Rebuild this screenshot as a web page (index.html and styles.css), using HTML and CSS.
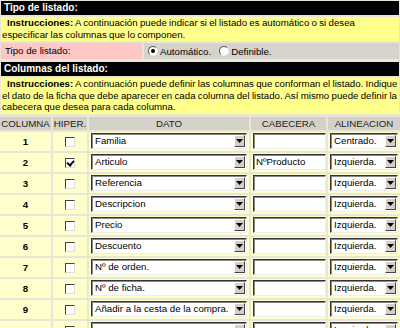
FILE: index.html
```html
<!DOCTYPE html>
<html lang="es">
<head>
    <meta charset="UTF-8">
    <title>Listado</title>
    <link rel="stylesheet" href="styles.css">
</head>
<body>
    <div class="page">
        <div class="bar">Tipo de listado:</div>
        <div class="note"><b>Instrucciones:</b> A continuación puede indicar si el listado es automático o si desea especificar las columnas que lo componen.</div>

        <div class="type-row">
            <div class="type-label">Tipo de listado:</div>
            <div class="type-opts">
                <span class="radio on"></span>Automático.
                <span class="radio"></span>Definible.
            </div>
        </div>

        <div class="bar bar-cols">Columnas del listado:</div>
        <div class="note"><b>Instrucciones:</b> A continuación puede definir las columnas que conforman el listado. Indique el dato de la ficha que debe aparecer en cada columna del listado. Así mismo puede definir la cabecera que desea para cada columna.</div>

        <table class="cols">
            <thead>
                <tr>
                    <th class="c-num">COLUMNA</th>
                    <th class="c-hip">HIPER.</th>
                    <th class="c-dato">DATO</th>
                    <th class="c-cab">CABECERA</th>
                    <th class="c-ali">ALINEACION</th>
                </tr>
            </thead>
            <tbody id="rows"></tbody>
        </table>
    </div>

    <script>
        // filas de columnas
        const rows = [
            ['Familia', false, '', 'Centrado.'],
            ['Articulo', true, 'NºProducto', 'Izquierda.'],
            ['Referencia', false, '', 'Izquierda.'],
            ['Descripcion', false, '', 'Izquierda.'],
            ['Precio', false, '', 'Izquierda.'],
            ['Descuento', false, '', 'Izquierda.'],
            ['Nº de orden.', false, '', 'Izquierda.'],
            ['Nº de ficha.', false, '', 'Izquierda.'],
            ['Añadir a la cesta de la compra.', false, '', 'Izquierda.'],
            ['', false, '', 'Izquierda.']
        ];

        const arrow = '<span class="btn"><svg width="7" height="4" viewBox="0 0 7 4"><path d="M0 0h7L3.5 4z" fill="#000"/></svg></span>';
        const tbody = document.getElementById('rows');

        rows.forEach((r, i) => {
            const tr = document.createElement('tr');
            tr.innerHTML =
                '<td class="num">' + (i + 1) + '</td>' +
                '<td class="hip"><span class="check' + (r[1] ? ' on' : '') + '"></span></td>' +
                '<td><span class="combo combo-dato"><span class="val">' + r[0] + '</span>' + arrow + '</span></td>' +
                '<td><span class="field">' + r[2] + '</span></td>' +
                '<td><span class="combo combo-ali"><span class="val">' + r[3] + '</span>' + arrow + '</span></td>';
            tbody.appendChild(tr);
        });
    </script>
</body>
</html>
```

FILE: styles.css
```css
body {
    margin: 0;
    background-color: #e9e6d8;
    font-family: 'Liberation Sans', Arial, sans-serif;
    font-size: 9.7px;
    color: #000;
}

.page {
    padding: 1px 1px 0 1px;
    display: flex;
    flex-direction: column;
    gap: 2px;
}

/* black section headers */
.bar {
    background-color: #000;
    color: #fff;
    font-weight: bold;
    font-size: 10px;
    padding: 0 3px;
    line-height: 14px;
}

.bar-cols {
    margin-top: 1px;
}

.note {
    background-color: #ffff8c;
    padding: 0 0 1px 1px;
    line-height: 11.5px;
    word-spacing: -0.4px;
    text-indent: 5px;
}

/* tipo de listado */
.type-row {
    display: flex;
    gap: 2px;
    height: 16px;
}

.type-label {
    width: 137px;
    background-color: #ffc6c6;
    padding-left: 4px;
    line-height: 16px;
}

.type-opts {
    flex: 1;
    background-color: #d6d3cb;
    display: flex;
    align-items: center;
    padding-left: 4px;
}

.radio {
    width: 8px;
    height: 8px;
    border-radius: 50%;
    background-color: #fff;
    border: 1px solid;
    border-color: #555 #eee #eee #555;
    margin-right: 2px;
    position: relative;
}

.radio:not(.on) {
    margin-left: 8px;
}

.radio.on::after {
    content: '';
    position: absolute;
    left: 2px;
    top: 2px;
    width: 4px;
    height: 4px;
    border-radius: 50%;
    background-color: #000;
}

/* tabla de columnas */
.cols {
    border-collapse: separate;
    border-spacing: 2px;
    margin: -1px -2px 0 -3px;
    table-layout: fixed;
    width: 404px;
}

.cols th {
    background-color: #d4d1c9;
    font-weight: normal;
    color: #222;
    height: 13px;
    padding: 0;
    line-height: 13px;
}

.c-num { width: 51px; }
.c-hip { width: 34px; }
.c-dato { width: 160px; }
.c-cab { width: 75px; }

.cols td {
    background-color: #ffffcc;
    height: 19px;
    padding: 0;
    vertical-align: middle;
}

.num {
    text-align: center;
    font-weight: bold;
}

.hip {
    text-align: center;
}

.check {
    display: inline-block;
    width: 8px;
    height: 8px;
    background-color: #fff;
    border: 1px solid;
    border-color: #444 #ddd #ddd #444;
    vertical-align: middle;
    position: relative;
}

.check.on::after {
    content: '';
    position: absolute;
    left: 2px;
    top: 0;
    width: 3px;
    height: 5px;
    border: solid #000;
    border-width: 0 2px 2px 0;
    transform: rotate(40deg);
}

/* inputs estilo clasico */
.combo,
.field {
    display: flex;
    align-items: center;
    height: 14px;
    background-color: #fff;
    border: 1px solid;
    border-color: #333 #eee #eee #333;
    box-shadow: inset 1px 1px 0 #888;
    margin-left: 2px;
    line-height: 14px;
    overflow: hidden;
    white-space: nowrap;
}

.combo-dato { width: 154px; }
.field { width: 69px; padding-left: 2px; margin-left: 2px; }
.combo-ali { width: 66px; }

.val {
    flex: 1;
    padding-left: 3px;
    overflow: hidden;
}

.btn {
    width: 11px;
    height: 12px;
    margin-right: 1px;
    background-color: #d4d0c8;
    border: 1px solid;
    border-color: #fff #444 #444 #fff;
    box-sizing: border-box;
    display: flex;
    align-items: center;
    justify-content: center;
}
```
